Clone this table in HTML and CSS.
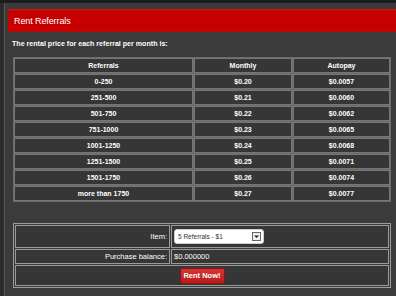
FILE: index.html
```html
<!DOCTYPE html>
<html>
<head>
<meta charset="utf-8">
<link rel="stylesheet" href="styles.css">
</head>
<body>
<div class="frame">
  <div class="panel">
    <div class="header">Rent Referrals</div>
    <div class="content">
      <p class="intro">The rental price for each referral per month is:</p>
      <table class="rates">
        <colgroup><col class="c1"><col class="c2"><col class="c3"></colgroup>
        <tr><td>Referrals</td><td>Monthly</td><td>Autopay</td></tr>
        <tr><td>0-250</td><td>$0.20</td><td>$0.0057</td></tr>
        <tr><td>251-500</td><td>$0.21</td><td>$0.0060</td></tr>
        <tr><td>501-750</td><td>$0.22</td><td>$0.0062</td></tr>
        <tr><td>751-1000</td><td>$0.23</td><td>$0.0065</td></tr>
        <tr><td>1001-1250</td><td>$0.24</td><td>$0.0068</td></tr>
        <tr><td>1251-1500</td><td>$0.25</td><td>$0.0071</td></tr>
        <tr><td>1501-1750</td><td>$0.26</td><td>$0.0074</td></tr>
        <tr><td>more than 1750</td><td>$0.27</td><td>$0.0077</td></tr>
      </table>
      <table class="form">
        <colgroup><col class="f1"><col class="f2"></colgroup>
        <tr class="r-item">
          <td class="label">Item:</td>
          <td class="value">
            <div class="select"><span>5 Referrals - $1</span><span class="arrow"><svg width="7" height="7" viewBox="0 0 7 7"><path d="M1 2.5h5L3.5 5z" fill="#222"/></svg></span></div>
          </td>
        </tr>
        <tr class="r-bal">
          <td class="label">Purchase balance:</td>
          <td class="value">$0.000000</td>
        </tr>
        <tr class="r-btn">
          <td colspan="2" class="action"><span class="btn">Rent Now!</span></td>
        </tr>
      </table>
    </div>
  </div>
</div>
</body>
</html>
```
FILE: styles.css
```css
html, body {
  margin: 0;
  padding: 0;
}
body {
  background: #2b2b2b;
  font-family: "Liberation Sans", Arial, sans-serif;
  color: #fff;
  overflow: hidden;
}
.frame {
  border-top: 3px solid #1c1c1c;
  padding-left: 4px;
  height: 293px;
}
.panel {
  background: #3b3b3b;
  border-left: 1px solid #595959;
  padding: 6px 0 0 3px;
  height: 287px;
}
.header {
  height: 23px;
  box-sizing: border-box;
  background: linear-gradient(#cf1c1c 0, #c60000 2px, #c60000 21px, #b80c0c 23px);
  display: flex;
  align-items: center;
  padding-left: 6px;
  font-size: 9px;
  letter-spacing: -0.1px;
}
.content {
  padding: 0 5px 0 4px;
}
.intro {
  margin: 7px 0 0;
  font-size: 7.1px;
  font-weight: bold;
  line-height: 10px;
}
.rates {
  margin: 8px 0 0 1px;
  width: 378px;
  table-layout: fixed;
  border-spacing: 1px;
  background: #6c6c6c;
}
.rates .c1 { width: 179px; }
.rates .c2 { width: 98px; }
.rates .c3 { width: 97px; }
.rates td {
  height: 13px;
  padding: 0;
  border: 1px solid #767676;
  background: #363636;
  text-align: center;
  font-size: 7px;
  font-weight: bold;
  line-height: 13px;
}
.form {
  margin: 21px 0 0 1px;
  width: 378px;
  table-layout: fixed;
  border: 1px solid #9c9c9c;
  border-spacing: 1px;
}
.form .f1 { width: 155px; }
.form td {
  padding: 0;
  border: 1px solid #9a9a9a;
  background: #363636;
  font-size: 7.5px;
}
.r-item td { height: 21px; }
.r-bal td { height: 13px; }
.r-btn td { height: 19px; }
.label {
  text-align: right;
  padding-right: 2px !important;
}
.value {
  padding-left: 2px !important;
}
.select {
  width: 90px;
  height: 15px;
  box-sizing: border-box;
  background: #fff;
  border: 1px solid #cfcfcf;
  border-radius: 3px;
  display: flex;
  align-items: center;
  justify-content: space-between;
  padding: 0 2px 0 3px;
  color: #333;
  font-size: 6.5px;
}
.arrow {
  width: 9px;
  height: 9px;
  box-sizing: border-box;
  border: 1px solid #666;
  background: #f0f0f0;
  display: flex;
  align-items: center;
  justify-content: center;
}
.arrow svg { display: block; }
.action {
  text-align: center;
}
.btn {
  display: inline-block;
  width: 45px;
  height: 16px;
  box-sizing: border-box;
  line-height: 14px;
  background: linear-gradient(#d63434, #b81c1c);
  border: 1px solid #8c1414;
  border-radius: 2px;
  font-weight: bold;
  font-size: 7.5px;
  color: #fff;
  vertical-align: middle;
}
```
